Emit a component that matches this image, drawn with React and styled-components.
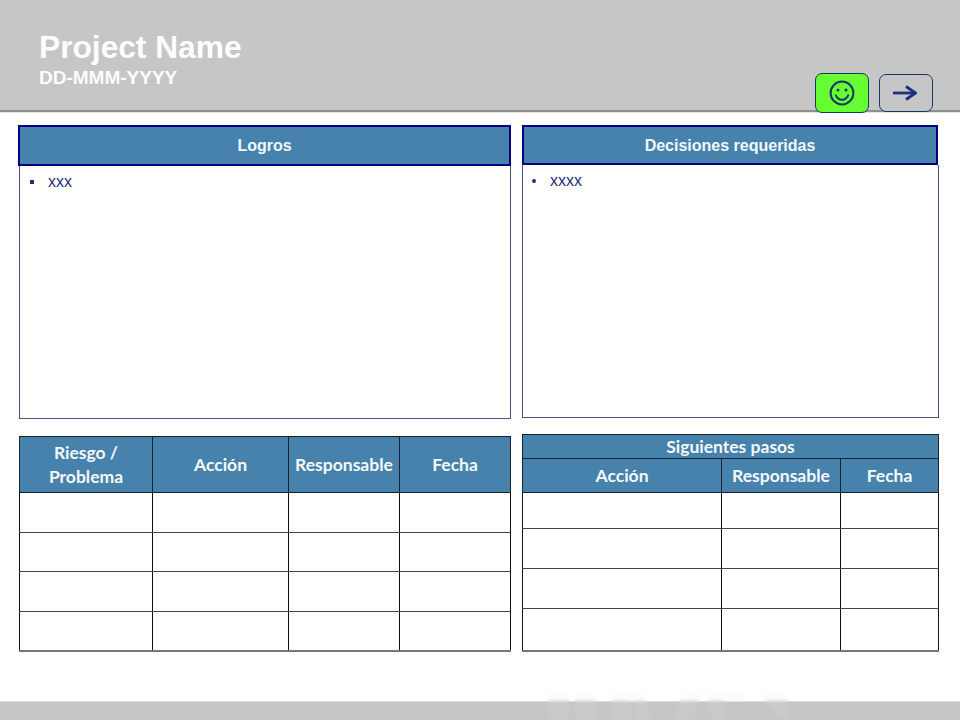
import React from "react";
import styled, { createGlobalStyle } from "styled-components";

const Global = createGlobalStyle`
  html, body { margin: 0; padding: 0; background: #fff; }
  body { width: 960px; height: 720px; overflow: hidden; font-family: "Liberation Sans", Arial, sans-serif; }
`;
const Page = styled.div`
  width: 960px; height: 720px; display: flex; flex-direction: column; background: #fff;
`;
const Header = styled.header`
  box-sizing: border-box; height: 112px; flex: none; background: #c6c6c6;
  border-bottom: 2px solid #8f8f8f; box-shadow: 0 1px 0 #e6e3dc;
  display: flex; padding: 31px 27px 0 39px; position: relative;
`;
const Titles = styled.div`display: flex; flex-direction: column; color: #fff;`;
const Title = styled.h1`margin: 0; font: bold 31.7px/33px "Liberation Sans", Arial, sans-serif; color: #fdfdfd;`;
const DateText = styled.div`margin-top: 3px; font: bold 19px/21px "Liberation Sans", Arial, sans-serif; color: #fdfdfd;`;
const Actions = styled.div`
  margin-left: auto; display: flex; align-items: flex-start; gap: 10px; padding-top: 42px;
`;
const StatusButton = styled.div`
  box-sizing: border-box; width: 54px; height: ${p => p.$h}px; margin-top: ${p => p.$top}px;
  border-radius: 7px; border: 1px solid #17375e; background: ${p => p.$bg};
  display: flex; align-items: center; justify-content: center;
`;
const Content = styled.main`
  flex: 1; display: grid; grid-template-columns: 493px 417px; column-gap: 11px;
  padding: 13px 0 0 18px; align-content: start;
`;
const Panel = styled.section`display: flex; flex-direction: column; height: ${p => p.$h}px;`;
const PanelHead = styled.div`
  box-sizing: border-box; height: ${p => p.$h}px; flex: none; background: #4682ab;
  border: 2px solid #000080; padding-top: ${p => p.$pt}px; display: flex; align-items: center; justify-content: center;
  font: bold 16px "Liberation Sans", Arial, sans-serif; color: #f4f7fa;
  margin-right: ${p => p.$mr}px;
`;
const PanelBody = styled.div`
  flex: 1; box-sizing: border-box; border: 1px solid #4a5578; border-top: 0; margin-left: ${p => p.$ml}px;
  padding: ${p => p.$pt}px 0 0 ${p => p.$pl}px;
`;
const Bullet = styled.div`
  display: flex; align-items: center; font: 16px/18px "Liberation Sans", Arial, sans-serif; color: #1f2f80;
`;
const Mark = styled.span`
  width: 4px; height: 4px; background: #1f2f80; flex: none;
  margin-right: 14px; border-radius: ${p => (p.$round ? "50%" : "0")};
`;
const TableSlot = styled.div`padding-top: ${p => p.$pt}px; margin-left: ${p => p.$ml}px;`;
const Table = styled.table`
  border-collapse: collapse; table-layout: fixed; width: ${p => p.$w}px;
  font: bold 17.5px "Lato", "Open Sans", sans-serif; color: #f6f8fa;
`;
const Th = styled.th`
  box-sizing: border-box; background: #4682ab; border: 1px solid #14222e; padding: 0; height: ${p => p.$h}px;
  font-weight: 700; line-height: ${p => p.$lh}px; text-align: center;
`;
const Td = styled.td`
  box-sizing: border-box; border: 1px solid #111; border-bottom: ${p => (p.$last ? "2px solid #777" : "1px solid #444")};
  padding: 0; height: ${p => p.$h}px; background: #fff;
`;
const Footer = styled.footer`
  height: 19px; flex: none; background: #c6c6c6; border-top: 1px solid #dcdcdc; box-sizing: border-box;
  position: relative; margin-top: auto;
`;
const Watermark = styled.svg`position: absolute; left: 540px; bottom: 0; filter: blur(1.5px);`;
const ArrowIcon = styled.svg`margin-right: 3px;`;

const Smile = () => (
  <svg width="26" height="26" viewBox="0 0 26 26" fill="none" stroke="#17375e" strokeWidth="2">
    <circle cx="13" cy="13" r="11.4" />
    <circle cx="9" cy="10" r="1.5" fill="#17375e" stroke="none" />
    <circle cx="17" cy="10" r="1.5" fill="#17375e" stroke="none" />
    <path d="M6.8 15.4c1.4 3 3.600 4.400 6.200 4.400s4.800-1.400 6.200-4.400" strokeLinecap="round" />
  </svg>
);
const Arrow = () => (
  <ArrowIcon width="24" height="16" viewBox="0 0 24 16" fill="none" stroke="#1f2f80" strokeWidth="2.8">
    <path d="M0 8h22" />
    <path d="M13 1.500 22.500 8 13 14.500" />
  </ArrowIcon>
);

const leftRows = [40, 39, 40, 39];
const rightRows = [36, 40, 40, 42];

export default function App() {
  return (
    <Page>
      <Global />
      <Header>
        <Titles>
          <Title>Project Name</Title>
          <DateText>DD-MMM-YYYY</DateText>
        </Titles>
        <Actions>
          <StatusButton $bg="#66ff33" $h={40} $top={0}><Smile /></StatusButton>
          <StatusButton $bg="#c6c6c6" $h={38} $top={1}><Arrow /></StatusButton>
        </Actions>
      </Header>
      <Content>
        <Panel $h={294}>
          <PanelHead $h={41} $mr={0} $pt={0}>Logros</PanelHead>
          <PanelBody $pt={7} $pl={10} $ml={1}>
            <Bullet><Mark />xxx</Bullet>
          </PanelBody>
        </Panel>
        <Panel $h={293}>
          <PanelHead $h={40} $mr={1} $pt={1}>Decisiones requeridas</PanelHead>
          <PanelBody $pt={7} $pl={9} $ml={0}>
            <Bullet><Mark $round />xxxx</Bullet>
          </PanelBody>
        </Panel>
        <TableSlot $pt={17} $ml={1}>
          <Table $w={491}>
            <colgroup>
              <col style={{ width: 133 }} /><col style={{ width: 136 }} />
              <col style={{ width: 111 }} /><col style={{ width: 111 }} />
            </colgroup>
            <thead>
              <tr>
                <Th $h={56} $lh={24}>Riesgo /<br />Problema</Th>
                <Th $h={56} $lh={24}>Acción</Th>
                <Th $h={56} $lh={24}>Responsable</Th>
                <Th $h={56} $lh={24}>Fecha</Th>
              </tr>
            </thead>
            <tbody>
              {leftRows.map((h, i) => (
                <tr key={i}>
                  {[0, 1, 2, 3].map(c => <Td key={c} $h={h} $last={i === leftRows.length - 1} />)}
                </tr>
              ))}
            </tbody>
          </Table>
        </TableSlot>
        <TableSlot $pt={15} $ml={0}>
          <Table $w={416}>
            <colgroup>
              <col style={{ width: 199 }} /><col style={{ width: 119 }} /><col style={{ width: 98 }} />
            </colgroup>
            <thead>
              <tr><Th $h={24} $lh={20} colSpan={3}>Siguientes pasos</Th></tr>
              <tr>
                <Th $h={34} $lh={20}>Acción</Th>
                <Th $h={34} $lh={20}>Responsable</Th>
                <Th $h={34} $lh={20}>Fecha</Th>
              </tr>
            </thead>
            <tbody>
              {rightRows.map((h, i) => (
                <tr key={i}>
                  {[0, 1, 2].map(c => <Td key={c} $h={h} $last={i === rightRows.length - 1} />)}
                </tr>
              ))}
            </tbody>
          </Table>
        </TableSlot>
      </Content>
      <Footer>
        <Watermark width="250" height="30" viewBox="0 0 250 30">
          <defs>
            <linearGradient id="mark" gradientUnits="userSpaceOnUse" x1="0" y1="0" x2="0" y2="30">
              <stop offset="0" stopColor="#fefefe" />
              <stop offset="0.36" stopColor="#fafafa" />
              <stop offset="0.37" stopColor="#cbcbcb" />
              <stop offset="1" stopColor="#c9c9c9" />
            </linearGradient>
          </defs>
          <path d="M8 0h20l2 30H10zM34 0h20l3 30H36zM70 0h20l3 30H74zM91 0h12l8 30H98zM142 0h20l-8 30h-18zM164 0h42l-4 10-18 0 4 20h-16zM218 0h24l14 30h-16z" fill="url(#mark)" />
        </Watermark>
      </Footer>
    </Page>
  );
}
